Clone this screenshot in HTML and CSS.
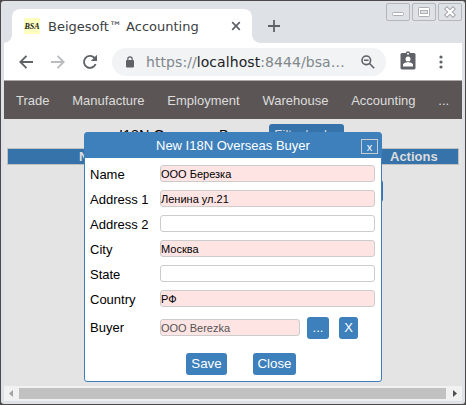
FILE: index.html
```html
<!DOCTYPE html>
<html lang="en">
<head>
<meta charset="utf-8">
<title>Beigesoft™ Accounting</title>
<link rel="stylesheet" href="styles.css">
</head>
<body>
<div class="window">
  <header class="tabstrip">
    <div class="tab">
      <span class="favicon">BSA</span>
      <span class="tab-title">Beigesoft™ Accounting</span>
      <svg class="tab-close" width="10" height="10" viewBox="0 0 10 10"><path d="M1.2 1.2l7.6 7.6M8.8 1.2L1.2 8.8" stroke="#5f6368" stroke-width="1.7"/></svg>
    </div>
    <svg class="new-tab" width="12" height="12" viewBox="0 0 12 12"><path d="M6 0v12M0 6h12" stroke="#5f6368" stroke-width="1.8"/></svg>
    <div class="controls">
      <span class="control"><svg width="22" height="16" viewBox="0 0 22 16"><rect x="5.5" y="8.5" width="11" height="3" rx="1" fill="#fff" stroke="#acaeb3"/></svg></span>
      <span class="control"><svg width="22" height="16" viewBox="0 0 22 16"><rect x="5.5" y="3.5" width="11" height="9" rx="1" fill="#fff" stroke="#acaeb3"/><rect x="7.5" y="6.500" width="7" height="3" fill="#dee1e6" stroke="#acaeb3"/></svg></span>
      <span class="control"><svg width="22" height="16" viewBox="0 0 22 16"><path d="M8 5l6 6M14 5l-6 6" stroke="#a4a6ab" stroke-width="4.2" stroke-linecap="square"/><path d="M8 5l6 6M14 5l-6 6" stroke="#fff" stroke-width="2.2" stroke-linecap="square"/></svg></span>
    </div>
  </header>
  <div class="toolbar">
    <svg class="back" width="14" height="14" viewBox="0 0 14 14"><path d="M14 7H1.5M7.5 .8L1.3 7l6.200 6.200" fill="none" stroke="#5f6368" stroke-width="1.9"/></svg>
    <svg class="forward" width="14" height="14" viewBox="0 0 14 14"><path d="M0 7h12.500M6.500 .8L12.700 7l-6.200 6.200" fill="none" stroke="#babcbe" stroke-width="1.9"/></svg>
    <svg class="reload" width="16" height="16" viewBox="0 0 16 16"><path d="M13.600 10a6 6 0 1 1-1.300-6.300l1 1" fill="none" stroke="#5f6368" stroke-width="1.9"/><path d="M15 .8v6.200H8.800z" fill="#5f6368"/></svg>
    <div class="omnibox">
      <svg class="lock" width="8" height="12" viewBox="0 0 8 12"><rect y="4" width="8" height="7.500" rx="1" fill="#5f6368"/><path d="M1.800 4.500V3a2.200 2.200 0 0 1 4.400 0v1.500" fill="none" stroke="#5f6368" stroke-width="1.200"/></svg>
      <span class="url">https://<b>localhost</b>:8444/bsa…</span>
      <svg class="magnifier" width="14" height="14" viewBox="0 0 14 14"><circle cx="5.300" cy="5.300" r="4.300" fill="none" stroke="#5f6368" stroke-width="1.600"/><path d="M3 5.300h4.600M8.500 8.500l4.700 4.700" stroke="#5f6368" stroke-width="1.600"/></svg>
    </div>
    <svg class="badge" width="16" height="19" viewBox="0 0 16 19"><rect x=".5" y="2" width="15" height="16.500" rx="1.500" fill="#5f6368"/><circle cx="8" cy="2.500" r="2.200" fill="#5f6368"/><circle cx="8" cy="2.700" r="1" fill="#fff"/><circle cx="8" cy="8" r="2.500" fill="#fff"/><path d="M3 15.500v-1.500c0-2 3.300-2.700 5-2.700s5 .7 5 2.700v1.500z" fill="#fff"/></svg>
    <svg class="more" width="4" height="14" viewBox="0 0 4 14"><g fill="#5f6368"><circle cx="2" cy="2" r="1.600"/><circle cx="2" cy="7" r="1.600"/><circle cx="2" cy="12" r="1.600"/></g></svg>
  </div>
  <nav class="menu">
    <span>Trade</span><span>Manufacture</span><span>Employment</span><span>Warehouse</span><span>Accounting</span><span>...</span>
  </nav>
  <main class="page">
    <div class="heading"><span>I18N Overseas Buyers</span><span class="filter">Filter/order</span></div>
    <div class="table-head"><span>Name</span><span>Actions</span></div>
    <div class="row-action"></div>
    <section class="dialog">
      <div class="dialog-head"><span class="dialog-title">New I18N Overseas Buyer</span><span class="dismiss">x</span></div>
      <div class="form">
        <label>Name</label><div class="field required">ООО Березка</div>
        <label>Address 1</label><div class="field required">Ленина ул.21</div>
        <label>Address 2</label><div class="field"></div>
        <label>City</label><div class="field required">Москва</div>
        <label>State</label><div class="field"></div>
        <label>Country</label><div class="field required">РФ</div>
      </div>
      <div class="buyer"><label>Buyer</label><div class="field required readonly">OOO Berezka</div><span class="btn pick">...</span><span class="btn clear">X</span></div>
      <div class="actions"><span class="btn save">Save</span><span class="btn close">Close</span></div>
    </section>
  </main>
  <div class="scrollbar">
    <svg width="15" height="15" viewBox="0 0 15 15"><path d="M9 4v7L5 7.500z" fill="#a3a3a3"/></svg>
    <span class="thumb"></span>
    <svg width="16" height="15" viewBox="0 0 16 15"><path d="M7 4v7l4-3.500z" fill="#505050"/></svg>
  </div>
</div>
</body>
</html>
```
FILE: styles.css
```css
* { box-sizing: border-box; }
body { margin: 0; background: #4d494b; font: 13px "Liberation Sans", sans-serif; color: #000; }
svg { display: block; flex: none; }
.window { width: 466px; height: 405px; padding: 0 3px 3px; border: 1px solid #4d494b; border-right-color: #454545; border-radius: 4px; background: #dee1e6; overflow: hidden; }

.tabstrip { display: flex; height: 42px; padding: 8px 0 0 8px; align-items: flex-start; }
.tab { position: relative; display: flex; align-items: center; width: 240px; height: 34px; padding-left: 12px; background: #fff; border-radius: 8px 8px 0 0; }
.tab::before, .tab::after { content: ""; position: absolute; bottom: 0; width: 8px; height: 8px; }
.tab::before { left: -8px; background: radial-gradient(circle at 0 0, transparent 7.5px, #fff 8px); }
.tab::after { right: -8px; background: radial-gradient(circle at 100% 0, transparent 7.5px, #fff 8px); }
.favicon { width: 16px; height: 16px; background: #ffffc0; font: italic bold 8px/17px "Liberation Serif", serif; text-align: center; color: #222; }
.tab-title { width: 152px; margin-left: 8px; font: 13px "DejaVu Sans", sans-serif; color: #3c4043; white-space: nowrap; }
.tab-close { margin-left: 31px; }
.new-tab { margin: 11px 0 0 16px; }
.controls { display: flex; gap: 2px; margin: -6px 0 0 auto; }
.control { width: 24px; height: 18px; border: 1px solid #b5b7bc; border-radius: 2px; }

.toolbar { display: flex; align-items: center; height: 38px; padding-left: 15px; background: #fff; border-bottom: 1px solid #aaa8a8; }
.forward { margin-left: 18px; }
.reload { margin-left: 17px; }
.omnibox { display: flex; align-items: center; width: 274px; height: 28px; margin-left: 14px; padding-left: 14px; background: #f1f3f4; border-radius: 14px; }
.url { width: 207px; margin-left: 12px; font: 14px "DejaVu Sans", sans-serif; letter-spacing: .07px; color: #80868b; white-space: nowrap; }
.url b { font-weight: 400; color: #202124; }
.magnifier { margin-left: 8px; }
.badge { margin: -2px 0 0 14px; }
.more { margin-left: 23px; }

.menu { display: flex; align-items: center; height: 38px; padding: 1px 0 0 12px; background: #5b5655; color: #ddd; white-space: nowrap; }
.menu span + span { margin-left: 22.8px; }

.page { position: relative; height: 267px; padding-top: 5px; background: #e4e4e4; }
.heading { display: flex; height: 22px; margin-left: 115px; font-size: 14.4px; line-height: 23px; white-space: nowrap; }
.heading > :first-child { width: 150px; }
.filter { width: 75px; background: #3773ab; border-radius: 3px; color: #ddd; font-size: 13.333px; line-height: 22px; text-align: center; }
.table-head { display: flex; width: 452px; height: 17px; margin: 2px 0 0 3px; border: 1px solid #c0c0c0; background: #3773ab; color: #ddd; font-weight: bold; line-height: 16px; }
.table-head > :first-child { width: 382px; padding-left: 71px; }
.row-action { width: 79px; height: 22px; margin: 15px 0 0 300px; background: #3773ab; border-radius: 3px; }

.dialog { position: absolute; left: 80px; top: 13px; width: 298px; height: 250px; border: 1px solid #3d80bb; border-radius: 3px; background: #fff; }
.dialog-head { display: flex; align-items: center; height: 25px; padding: 0 3px 0 71px; background: #3d80bb; color: #fff; }
.dismiss { width: 17px; height: 15px; margin: 2px 0 0 auto; border: 1px solid #ccc; font-size: 11px; line-height: 14px; text-align: center; }
.form { display: grid; grid-template-columns: 70px 215px; grid-auto-rows: 17px; row-gap: 8px; padding: 7px 0 0 5px; }
label { line-height: 20px; white-space: nowrap; }
.field { height: 17px; padding-left: 0; border: 1px solid #ccc; border-radius: 3px; font-size: 11px; line-height: 16px; white-space: nowrap; }
.required { background: #ffe4e4; }
.readonly { width: 140px; margin-top: 2px; color: #545454; }
.buyer { display: flex; height: 22px; margin: 10px 0 0 5px; }
.buyer label { width: 70px; line-height: 22px; }
.btn { height: 22px; border-radius: 3px; background: #3d80bb; color: #fff; line-height: 22px; text-align: center; }
.pick { width: 22px; margin-left: 7px; }
.clear { width: 19px; margin-left: 10px; }
.actions { display: flex; gap: 26px; margin: 14px 0 0 101px; }
.actions .btn { font-size: 13.333px; }
.save { width: 41px; }
.close { width: 43px; }

.scrollbar { display: flex; align-items: center; height: 15px; background: #f1f1f1; }
.thumb { flex: 1; height: 11px; background: #c1c1c1; }
```
